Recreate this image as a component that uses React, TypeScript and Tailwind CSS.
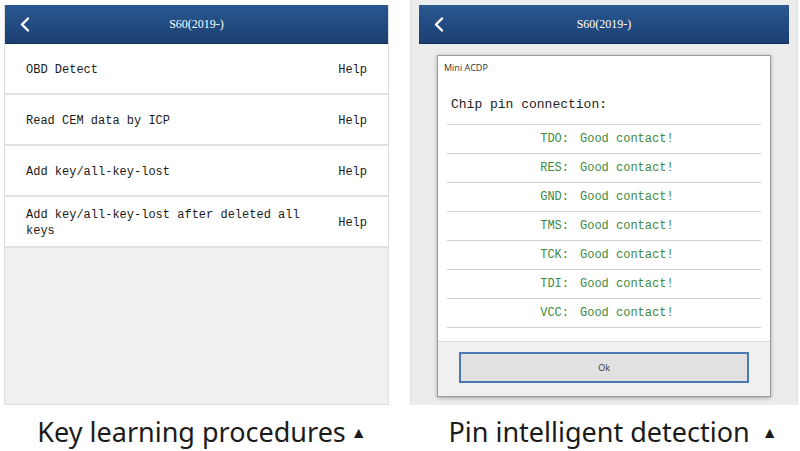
import React from 'react';

const mono = { fontFamily: '"Liberation Mono", "DejaVu Sans Mono", monospace' };

const Header: React.FC = () => (
  <div className="h-[39px] flex items-center relative bg-gradient-to-b from-[#2a5891] to-[#1b3f72] border-b border-[#123056]">
    <svg className="absolute left-[14px] top-[12px]" width="12" height="15" viewBox="0 0 12 15">
      <path d="M9 1.5 L3 7.5 L9 13.5" stroke="#ffffff" strokeWidth="2.4" fill="none" strokeLinecap="round" strokeLinejoin="round" />
    </svg>
    <div className="flex-1 text-center text-white text-[12px]" style={{ fontFamily: '"Liberation Serif", serif' }}>
      S60(2019-)
    </div>
  </div>
);

const Caption: React.FC<{ text: string; gap: string }> = ({ text, gap }) => (
  <div className="flex items-center justify-center text-[27px] text-[#1b1b1b] leading-none" style={{ fontFamily: '"Noto Sans", "Open Sans", sans-serif' }}>
    <span>{text}</span>
    <span className={`text-[16px] ${gap}`}>▲</span>
  </div>
);

const App: React.FC = () => {
  const items = [
    'OBD Detect',
    'Read CEM data by ICP',
    'Add key/all-key-lost',
    'Add key/all-key-lost after deleted all keys',
  ];

  const pins = ['TDO', 'RES', 'GND', 'TMS', 'TCK', 'TDI', 'VCC'];

  return (
    <div className="w-[800px] h-[451px] bg-white flex overflow-hidden">
      {/* Left: key learning */}
      <div className="w-[404px] flex flex-col">
        <div className="ml-[4px] w-[385px] mt-[5px] h-[400px] flex flex-col bg-[#f0f0f0] border-x border-b border-[#dedede]">
          <Header />
          {items.map((item, i) => (
            <div key={i} className="h-[51px] pt-[3px] bg-white border-b-2 border-[#e2e2e2] flex items-center pl-[21px] pr-[21px] text-[12px] text-[#1a1a1a]" style={mono}>
              <div className="flex-1 leading-[16px] pr-[30px]">{item}</div>
              <div>Help</div>
            </div>
          ))}
        </div>
        <div className="mt-[13px]">
          <Caption text="Key learning procedures" gap="ml-[5px]" />
        </div>
      </div>

      {/* Right: pin detection */}
      <div className="flex-1 flex flex-col">
        <div className="ml-[6px] w-[388px] h-[405px] bg-[#ececec] border-x border-[#e0e0e0] pt-[5px] px-[8px]">
          <Header />
          <div className="mt-[11px] ml-[18px] mr-[18px] bg-white border border-[#9a9a9a] shadow-[0_1px_4px_rgba(0,0,0,0.3)] flex flex-col">
            <div className="pl-[6px] pt-[5px] text-[9px] text-[#333]" style={{ fontFamily: '"Open Sans", "Noto Sans", sans-serif' }}>
              Mini ACDP
            </div>
            <div className="mx-[9px] mt-[20px] border-b border-[#cfcfcf] pb-[10px] pl-[4px] text-[13px] text-[#222]" style={mono}>
              Chip pin connection:
            </div>
            {pins.map((p) => (
              <div key={p} className="mx-[9px] h-[29px] border-b border-[#cfcfcf] flex items-center text-[12px] text-[#3f8a3f]" style={mono}>
                <div className="w-[122px] text-right">{p}:</div>
                <div className="ml-[11px]">Good contact!</div>
              </div>
            ))}
            <div className="mt-[13px] bg-[#f0f0f0] border-t border-[#dadada] px-[21px] pt-[10px] pb-[13px]">
              <div className="h-[31px] bg-[#e1e1e1] border-2 border-[#4a78b0] flex items-center justify-center text-[9px] text-[#333]" style={{ fontFamily: '"Open Sans", "Noto Sans", sans-serif' }}>
                Ok
              </div>
            </div>
          </div>
        </div>
        <div className="mt-[13px] pl-[22px]">
          <Caption text="Pin intelligent detection" gap="ml-[12px]" />
        </div>
      </div>
    </div>
  );
};

export default App;
